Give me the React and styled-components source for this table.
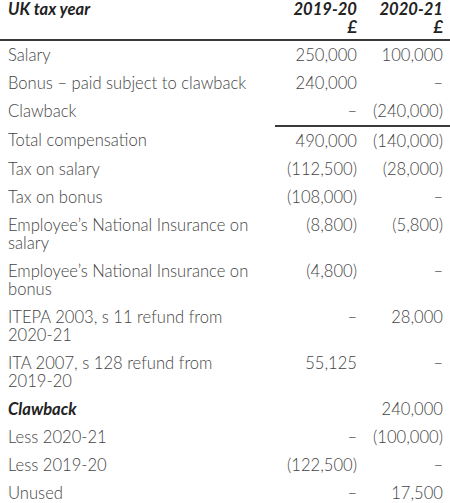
import React from "react";
import styled, { createGlobalStyle } from "styled-components";

const GlobalStyle = createGlobalStyle`
  body {
    margin: 0;
    background: #fff;
    font-family: Lato, "Liberation Sans", sans-serif;
  }
`;

const Table = styled.table`
  width: 450px;
  border-collapse: collapse;
  table-layout: fixed;
  font-size: 16.6px;
  font-weight: 300;
  line-height: 18px;
  color: #444;
`;

const HeadCell = styled.th`
  font-weight: 700;
  font-style: italic;
  color: #222;
  text-align: ${(p) => (p.$num ? "right" : "left")};
  vertical-align: top;
  padding: 0 ${(p) => (p.$num ? "7px" : "0")} 3px ${(p) => (p.$num ? "0" : "8px")};
  border-bottom: 2px solid #3a3a3a;
`;

const Cell = styled.td`
  padding: 5px ${(p) => (p.$num ? "7px" : "22px")} 5px ${(p) => (p.$num ? "0" : "8px")};
  text-align: ${(p) => (p.$num ? "right" : "left")};
  vertical-align: top;
  border-top: ${(p) => (p.$rule ? "2px solid #3a3a3a" : "none")};
`;

const Label = styled.span`
  font-weight: ${(p) => (p.$bold ? 700 : 300)};
  font-style: ${(p) => (p.$bold ? "italic" : "normal")};
  color: ${(p) => (p.$bold ? "#222" : "inherit")};
`;

const rows = [
  ["Salary", "250,000", "100,000"],
  ["Bonus – paid subject to clawback", "240,000", "–"],
  ["Clawback", "–", "(240,000)"],
  ["Total compensation", "490,000", "(140,000)", "rule"],
  ["Tax on salary", "(112,500)", "(28,000)"],
  ["Tax on bonus", "(108,000)", "–"],
  ["Employee’s National Insurance on salary", "(8,800)", "(5,800)"],
  ["Employee’s National Insurance on bonus", "(4,800)", "–"],
  ["ITEPA 2003, s 11 refund from 2020\u201121", "–", "28,000"],
  ["ITA 2007, s 128 refund from 2019\u201120", "55,125", "–"],
  ["Clawback", "", "240,000", "bold"],
  ["Less 2020-21", "–", "(100,000)"],
  ["Less 2019-20", "(122,500)", "–"],
  ["Unused", "–", "17,500"],
];

export default function App() {
  return (
    <>
      <GlobalStyle />
      <Table>
        <colgroup>
          <col style={{ width: 275 }} />
          <col style={{ width: 89 }} />
          <col style={{ width: 86 }} />
        </colgroup>
        <thead>
          <tr>
            <HeadCell>UK tax year</HeadCell>
            <HeadCell $num>
              2019-20
              <br />£
            </HeadCell>
            <HeadCell $num>
              2020-21
              <br />£
            </HeadCell>
          </tr>
        </thead>
        <tbody>
          {rows.map(([label, a, b, flag], i) => (
            <tr key={i}>
              <Cell>
                <Label $bold={flag === "bold"}>{label}</Label>
              </Cell>
              <Cell $num $rule={flag === "rule"}>{a}</Cell>
              <Cell $num $rule={flag === "rule"}>{b}</Cell>
            </tr>
          ))}
        </tbody>
      </Table>
    </>
  );
}
